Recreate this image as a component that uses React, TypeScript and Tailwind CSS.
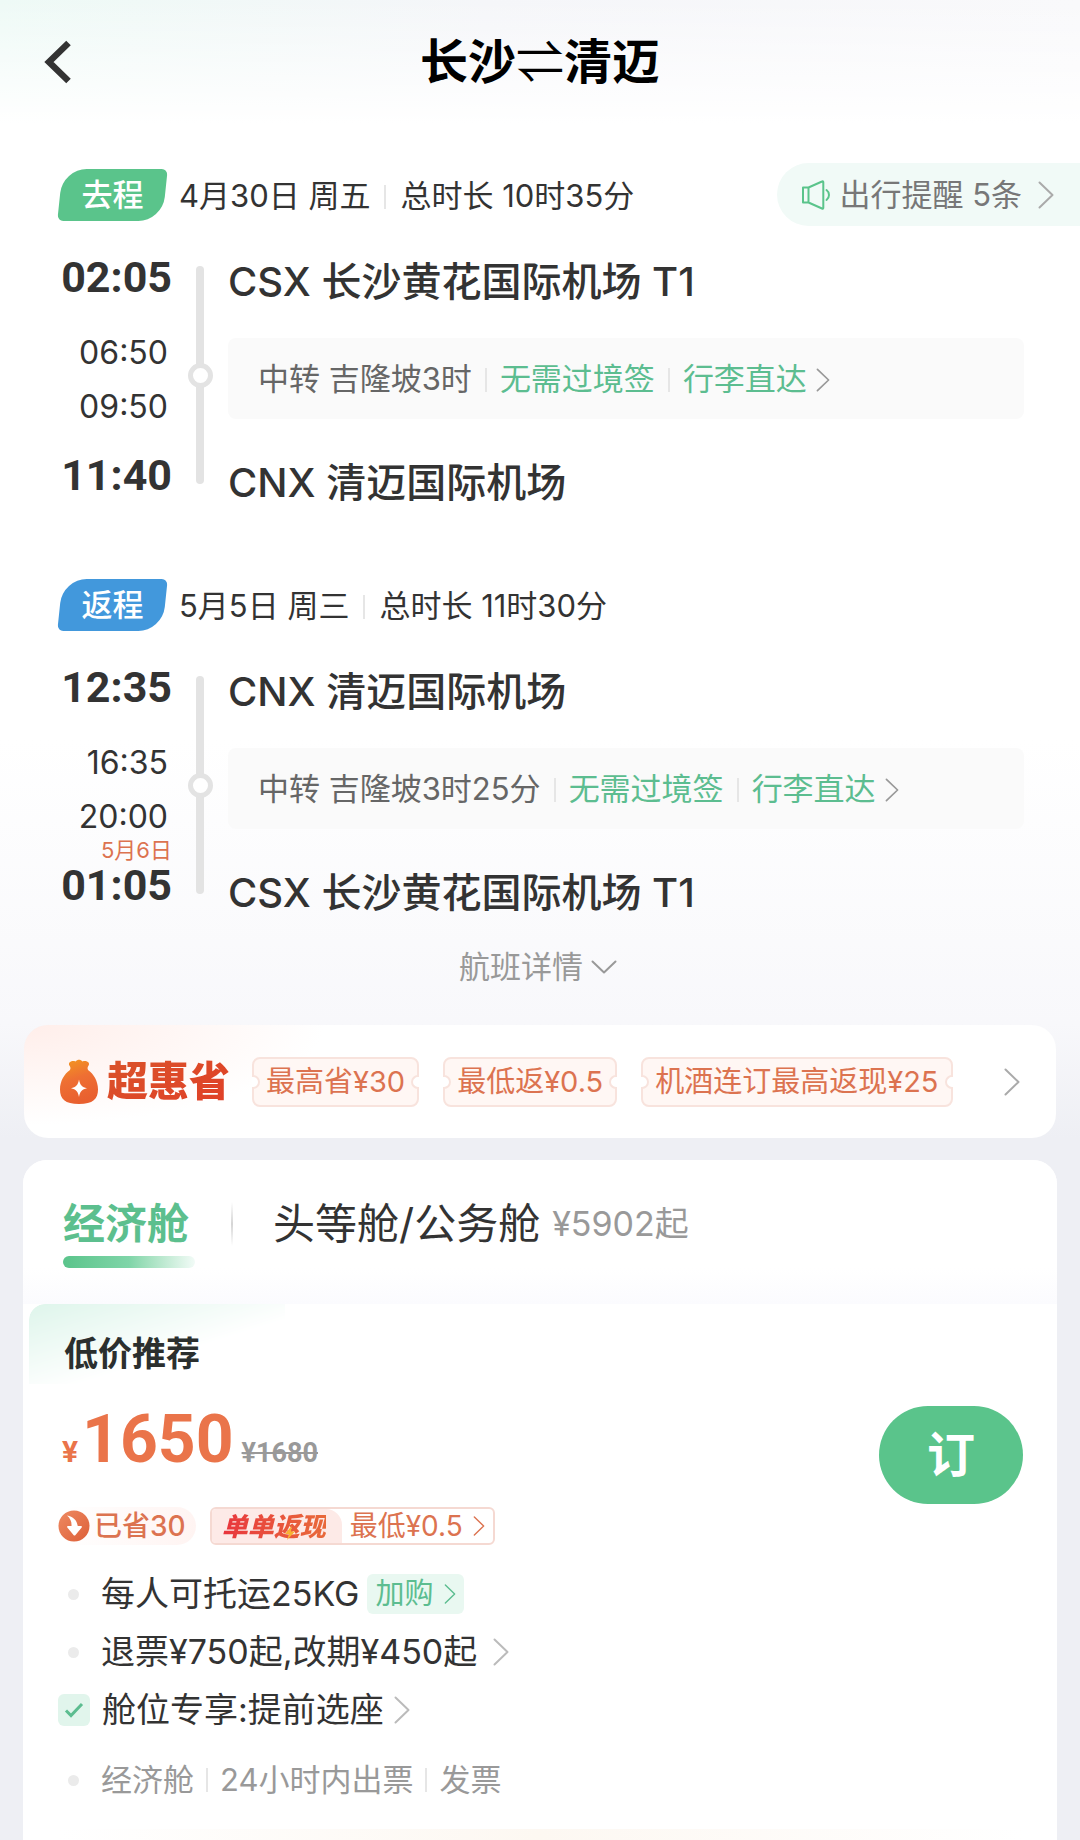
import clsx from "clsx";

type Leg = {
  tag: string;
  tagColor: string;
  date: string;
  duration: string;
  depart: string;
  arrive: string;
  arriveDate?: string;
  stopIn: string;
  stopOut: string;
  from: string;
  to: string;
  transfer: string;
};

const legs: Leg[] = [
  {
    tag: "去程",
    tagColor: "bg-[#5ac48b]",
    date: "4月30日 周五",
    duration: "总时长 10时35分",
    depart: "02:05",
    arrive: "11:40",
    stopIn: "06:50",
    stopOut: "09:50",
    from: "CSX 长沙黄花国际机场 T1",
    to: "CNX 清迈国际机场",
    transfer: "中转 吉隆坡3时",
  },
  {
    tag: "返程",
    tagColor: "bg-[#4298dc]",
    date: "5月5日 周三",
    duration: "总时长 11时30分",
    depart: "12:35",
    arrive: "01:05",
    arriveDate: "5月6日",
    stopIn: "16:35",
    stopOut: "20:00",
    from: "CNX 清迈国际机场",
    to: "CSX 长沙黄花国际机场 T1",
    transfer: "中转 吉隆坡3时25分",
  },
];

const coupons = ["最高省¥30", "最低返¥0.5", "机酒连订最高返现¥25"];

function Chevron({ className }: { className?: string }) {
  return (
    <svg viewBox="0 0 16 28" fill="none" className={clsx("shrink-0", className)} aria-hidden="true">
      <path d="M1.5 1.5 14.5 14 1.5 26.5" stroke="currentColor" strokeWidth="2" strokeLinecap="round" strokeLinejoin="round" />
    </svg>
  );
}

function Divider() {
  return <span className="h-6 w-0.5 shrink-0 bg-[#e6e6e6]" />;
}

function SpeakerIcon() {
  return (
    <svg viewBox="0 0 30 30" fill="none" className="h-[30px] w-[30px] shrink-0 text-[#5ac48b]" aria-hidden="true">
      <path d="M2 7.500h5.500L21 1.500c.8-.4 1.300 0 1.300.8v25.400c0 .8-.5 1.200-1.300.8L7.500 22.500H2z M7.500 7.500v15" stroke="currentColor" strokeWidth="2" strokeLinejoin="round" />
      <path d="M25.500 10c1.600 1.200 2.500 3 2.500 5s-.9 3.800-2.500 5" stroke="currentColor" strokeWidth="2" strokeLinecap="round" />
    </svg>
  );
}

function BagIcon() {
  return (
    <svg viewBox="0 0 40 46" className="h-[46px] w-10 shrink-0" aria-hidden="true">
      <defs>
        <linearGradient id="bag" x1="0" y1="0" x2="0.3" y2="1">
          <stop offset="0" stopColor="#f39a1f" />
          <stop offset="0.5" stopColor="#ee6f33" />
          <stop offset="1" stopColor="#e9602f" />
        </linearGradient>
      </defs>
      <path
        d="M16.500 2.500c2-2.300 5-2.300 7 0 1.600-.6 3-.6 4.500 0 2.300.8 2.600 2.800 1.300 4.500-1 1.400-1 3 0 4.300C34.500 15 39 22 39 30.500 39 40 34 45 20 45S1 40 1 30.500C1 22 5.500 15 10.700 11.300c1-1.300 1-2.900 0-4.300-1.300-1.700-1-3.700 1.300-4.500 1.500-.6 2.900-.6 4.500 0z"
        fill="url(#bag)"
      />
      <path d="M20 20.500c1 5.500 3 7.700 8 8.800-5 1-7 3.200-8 8.700-1-5.500-3-7.700-8-8.700 5-1.100 7-3.300 8-8.800z" fill="#fff" />
    </svg>
  );
}

function SavedIcon() {
  return (
    <svg viewBox="0 0 32 32" className="h-8 w-8 shrink-0" aria-hidden="true">
      <defs>
        <linearGradient id="saved" x1="0" y1="0" x2="1" y2="1">
          <stop offset="0" stopColor="#ee8a62" />
          <stop offset="1" stopColor="#dd5f38" />
        </linearGradient>
      </defs>
      <circle cx="16" cy="16" r="15.500" fill="url(#saved)" />
      <path d="M9 5.500c6 1.200 10 4.500 10.700 10.500H23c.9 0 1.200.7.700 1.400l-6.200 7.600c-.6.700-1.400.7-2 0l-6.200-7.600c-.5-.7-.2-1.400.7-1.400h3.500c.3-4-1-7.500-4.500-10.500z" fill="#fff" />
    </svg>
  );
}

function Coupon({ label }: { label: string }) {
  return (
    <span className="relative flex h-[50px] items-center whitespace-nowrap rounded-lg border-2 border-[#f8e3dd] bg-[#fff7f4] px-3 text-[29px] text-[#dc7350]">
      {label}
      <span className="absolute top-1/2 -left-0.5 h-3.5 w-2 -translate-y-1/2 rounded-r-full border-2 border-l-0 border-[#f8e3dd] bg-white" />
      <span className="absolute top-1/2 -right-0.5 h-3.5 w-2 -translate-y-1/2 rounded-l-full border-2 border-r-0 border-[#f8e3dd] bg-white" />
    </span>
  );
}

function LegSection({ leg, reminder }: { leg: Leg; reminder?: boolean }) {
  return (
    <section>
      <div className="flex h-[63px] items-center text-[31px]">
        <span className="relative isolate flex h-[52px] w-[105px] items-center justify-center pt-0.5 font-medium text-white">
          <span className={clsx("absolute inset-0 -z-10 -skew-x-6 rounded-tl-[24px] rounded-tr-md rounded-br-[24px] rounded-bl-md", leg.tagColor)} />
          {leg.tag}
        </span>
        <div className="ml-3.5 flex items-center gap-3.5 pt-1 text-[31px]">
          <span>{leg.date}</span>
          <Divider />
          <span>{leg.duration}</span>
        </div>
        {reminder && (
          <button className="-mr-14 ml-auto flex h-full items-center rounded-l-full bg-[#f1faf7] pr-[26px] pl-6 text-[#777]">
            <SpeakerIcon />
            <span className="ml-2 pt-0.5">出行提醒 5条</span>
            <Chevron className="ml-4 h-7 w-4 text-[#aaa]" />
          </button>
        )}
      </div>

      <div className="mt-6 grid grid-cols-[112px_56px_1fr] items-start">
        <div className="pt-0.5 text-right text-[32px] leading-[54px]">
          <div className="font-[Roboto] text-[43px] leading-[50px] font-bold">{leg.depart}</div>
          <div className="mt-6 pr-1">{leg.stopIn}</div>
          <div className="pr-1">{leg.stopOut}</div>
          <div className="h-4 text-[22px] leading-[12px] text-[#dc7350]">{leg.arriveDate}</div>
          <div className="font-[Roboto] text-[43px] leading-[50px] font-bold">{leg.arrive}</div>
        </div>

        <div className="mt-4 flex h-[218px] w-2 items-center justify-center justify-self-center rounded-full bg-[#e3e3e3]">
          <span className="size-[25px] shrink-0 rounded-full border-5 border-[#e3e3e3] bg-white" />
        </div>

        <div>
          <div className="text-[40px] leading-[64px] font-medium">{leg.from}</div>
          <button className="mt-6 flex h-[81px] w-full items-center gap-[13px] rounded-lg bg-[#fafafa] px-[30px] pt-0.5 text-[31px] text-[#666]">
            <span>{leg.transfer}</span>
            <Divider />
            <span className="text-[#5cbd90]">无需过境签</span>
            <Divider />
            <span className="text-[#5cbd90]">行李直达</span>
            <Chevron className="-ml-1 h-6 w-3.5 text-[#999]" />
          </button>
          <div className="mt-8 text-[40px] leading-[64px] font-medium">{leg.to}</div>
        </div>
      </div>
    </section>
  );
}

function Bullet() {
  return <span className="mx-2.5 size-[11px] shrink-0 rounded-full bg-[#ebebeb]" />;
}

function FareCard() {
  return (
    <section className="mx-[23px] mt-[22px] flex flex-1 flex-col rounded-t-3xl bg-white">
      <div role="tablist" className="flex h-[144px] items-start rounded-t-3xl bg-linear-to-b from-white from-75% to-[#fbfbfe] px-10 pt-8">
        <button role="tab" aria-selected="true" className="flex flex-col text-[42px] leading-[64px] font-bold text-[#5cbf8e]">
          <span className="pr-1.5">经济舱</span>
          <span className="h-3 rounded-full bg-linear-to-r from-[#5ac48b] via-[#7fd5a8] to-[#f2fbf7]" />
        </button>
        <span className="mt-2.5 ml-9 h-11 w-0.5 bg-linear-to-b from-white via-[#d5d5d5] to-white" />
        <button role="tab" aria-selected="false" className="ml-10 flex items-center text-[42px] leading-[64px]">
          头等舱/公务舱
          <span className="ml-3 text-[34px] text-[#999]">¥5902起</span>
        </button>
      </div>

      <div className="relative isolate flex flex-1 flex-col pr-[34px] pl-[35px]">
        <div className="absolute top-0 left-1.5 -z-10 h-20 w-64 rounded-tl-2xl bg-[#def5eb] mask-[linear-gradient(to_bottom_right,black,transparent_60%)]" />
        <h2 className="mt-6 pl-1.5 text-[34px] leading-[52px] font-bold text-[#2b2f2e]">低价推荐</h2>

        <div className="mt-[22px] flex items-start justify-between">
          <div className="flex items-baseline pl-1 font-[Roboto] leading-[76px] font-bold text-[#ea744a]">
            <span className="text-[30px]">¥</span>
            <span className="ml-1 text-[66px]">1650</span>
            <s className="ml-2 text-[27px] text-[#999]">¥1680</s>
          </div>
          <button className="mt-1 -mb-7 h-[98px] w-36 rounded-full bg-[#5ac48b] text-5xl font-bold text-white">订</button>
        </div>

        <div className="mt-4 flex h-[38px] items-center text-[28px] text-[#dc7350]">
          <span className="flex h-full items-center rounded-full bg-linear-to-r from-white to-[#fff4f2] pr-2.5 font-medium">
            <SavedIcon />
            <span className="ml-1">已省30</span>
          </span>
          <button className="ml-3.5 flex h-full items-center overflow-hidden rounded-md border-2 border-[#f5d9d2]">
            <span className="flex h-full items-center rounded-tr-2xl bg-[#fdeae7] pr-4 pl-2.5">
              <span className="relative bg-linear-to-r from-[#e8343d] to-[#e8693a] bg-clip-text text-[26px] font-black text-transparent italic">
                单单返现
                <svg viewBox="0 0 12 14" className="absolute top-1/2 left-[62px] h-3.5 w-3" aria-hidden="true">
                  <path d="M7.500 0 1 8h4l-2 6 8-8.500H7z" fill="#f9b233" />
                </svg>
              </span>
            </span>
            <span className="ml-2">最低¥0.5</span>
            <Chevron className="mr-2 ml-2.5 h-5 w-3" />
          </button>
        </div>

        <ul className="mt-5 text-[34px] leading-[58px]">
          <li className="flex items-center">
            <Bullet />
            <span className="ml-3">每人可托运25KG</span>
            <button className="ml-2 flex h-10 items-center rounded-md bg-[#e9f8f1] px-2 text-[29px] text-[#5cbd90]">
              加购
              <Chevron className="ml-2.5 h-5 w-3" />
            </button>
          </li>
          <li className="flex items-center">
            <Bullet />
            <a href="#refund" className="ml-3 flex items-center">
              退票¥750起,改期¥450起
              <Chevron className="ml-4 h-7 w-4 text-[#bbb]" />
            </a>
          </li>
          <li className="flex items-center">
            <span className="flex size-8 items-center justify-center rounded-md bg-[#e1f5ec]">
              <svg viewBox="0 0 20 16" fill="none" className="h-4 w-5" aria-hidden="true">
                <path d="M2 8.500 7 13.500 18 2" stroke="#5cbd90" strokeWidth="3" />
              </svg>
            </span>
            <a href="#seat" className="ml-3 flex items-center">
              舱位专享:提前选座
              <Chevron className="ml-2.5 h-7 w-4 text-[#bbb]" />
            </a>
          </li>
          <li className="mt-3 flex items-center text-[31px] text-[#999]">
            <Bullet />
            <span className="ml-3 flex items-center gap-3">
              <span>经济舱</span>
              <Divider />
              <span>24小时内出票</span>
              <Divider />
              <span>发票</span>
            </span>
          </li>
        </ul>
        <div className="mt-auto h-[11px] bg-linear-to-r from-white via-[#fdf8f2] to-white" />
      </div>
    </section>
  );
}

export default function App() {
  return (
    <div className="flex min-h-screen flex-col bg-[#eeeff4] font-['Inter','Noto_Sans_CJK_SC',sans-serif] text-[#333]" lang="zh-CN">
      <div className="bg-linear-to-b from-white from-65% via-[#f8f8fb] via-90% to-[#eeeff4]">
        <header className="grid h-[124px] grid-cols-[1fr_auto_1fr] items-center bg-[linear-gradient(to_bottom,transparent,white),linear-gradient(to_right,#eefaf6,#f5f6f9_45%,#f9f9fb)] px-11">
          <button aria-label="返回" className="w-8">
            <svg viewBox="0 0 28 44" fill="none" className="h-11 w-7" aria-hidden="true">
              <path d="M24.500 3 5 22 24.500 41" stroke="#333" strokeWidth="6.500" />
            </svg>
          </button>
          <h1 className="flex items-center text-5xl font-bold text-black">
            长沙<span className="font-normal">⇌</span>清迈
          </h1>
        </header>

        <main className="px-14 pt-[39px] pl-[60px]">
          <LegSection leg={legs[0]} reminder />
          <div className="h-[58px]" />
          <LegSection leg={legs[1]} />
          <button className="mx-auto mt-[22px] flex h-10 items-center gap-2 pr-2 text-[31px] text-[#999]">
            航班详情
            <svg viewBox="0 0 26 14" fill="none" className="h-3.5 w-[26px]" aria-hidden="true">
              <path d="M1.500 1.500 13 12.500 24.500 1.500" stroke="currentColor" strokeWidth="2" strokeLinecap="round" strokeLinejoin="round" />
            </svg>
          </button>
        </main>

        <a
          href="#deals"
          className="mx-6 mt-[38px] flex h-[113px] items-center rounded-3xl bg-white bg-[radial-gradient(ellipse_300px_100px_at_top_left,#ffeeea,white)] pr-9 pl-[35px]"
        >
          <BagIcon />
          <span className="ml-2 bg-linear-to-br from-[#d9542a] to-[#e13d27] bg-clip-text text-[41px] font-black text-transparent">超惠省</span>
          <span className="ml-[22px] flex gap-6">
            {coupons.map((label) => (
              <Coupon key={label} label={label} />
            ))}
          </span>
          <Chevron className="ml-auto h-[30px] w-4 text-[#aaa]" />
        </a>
      </div>

      <FareCard />
    </div>
  );
}
